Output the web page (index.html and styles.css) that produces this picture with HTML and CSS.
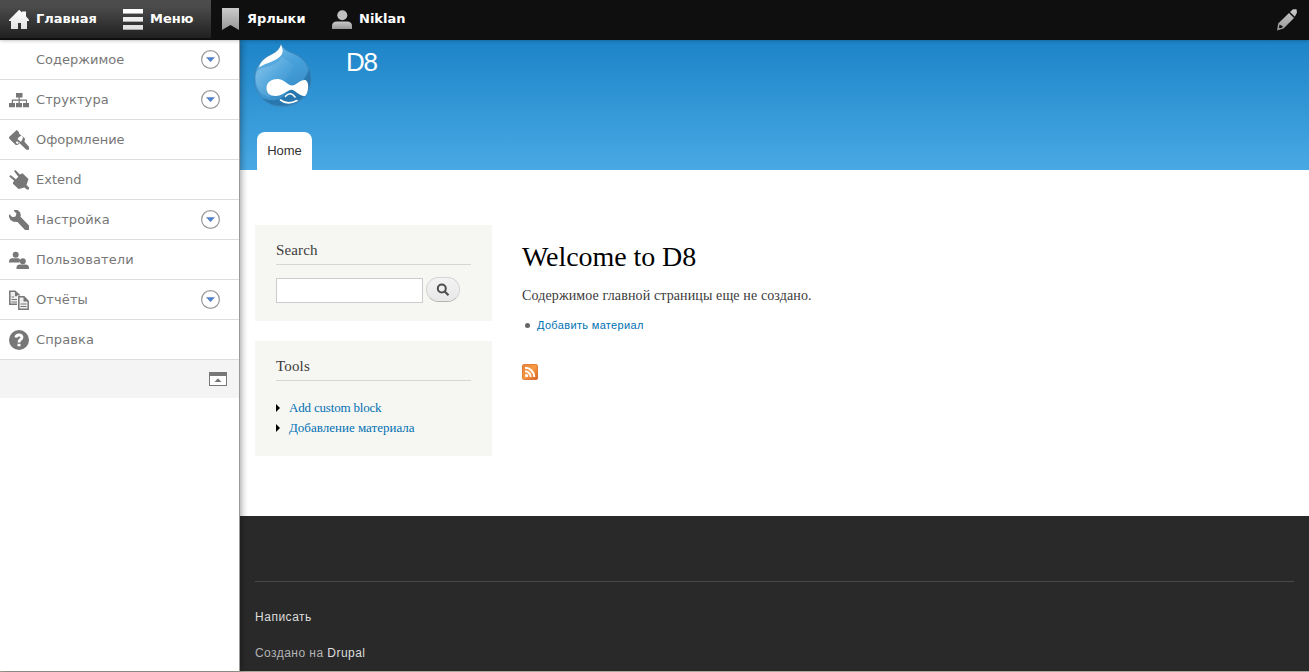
FILE: index.html
```html
<!DOCTYPE html>
<html lang="ru">
<head>
<meta charset="utf-8">
<title>Welcome to D8</title>
<link rel="stylesheet" href="styles.css">
</head>
<body>
<nav class="toolbar">
  <div class="toolbar-active">
    <a class="tab tab-home"><svg class="icon" width="20" height="20" viewBox="0 0 20 20"><defs><linearGradient id="w" x2="0" y2="1"><stop offset="0" stop-color="#fff"/><stop offset="1" stop-color="#e2e2e2"/></linearGradient><linearGradient id="g" x2="0" y2="1"><stop offset="0" stop-color="#cacaca"/><stop offset="1" stop-color="#979797"/></linearGradient></defs><path fill="url(#w)" d="M0 11 10.200 .8l2.800 2.700V2.500h4v4.800L20 10.800V12h-2v8h-6v-6H9v6H2V12H0z"/></svg><span class="home-text">Главная</span></a>
    <a class="tab tab-menu"><svg class="icon" width="20" height="22" viewBox="0 0 20 22"><g><rect width="20" height="5" fill="#fff"/><rect y="8" width="20" height="5" fill="#eee"/><rect y="16" width="20" height="5" fill="#e2e2e2"/></g><path fill="#aaa" d="M0 4h20v1H0zM0 12h20v1H0zM0 20h20v1H0z"/></svg><span>Меню</span></a>
  </div>
  <a class="tab tab-short"><svg class="icon" width="17" height="22" viewBox="0 0 17 22"><path fill="url(#g)" d="M0 0h17v22l-8.500-5L0 22z"/></svg><span>Ярлыки</span></a>
  <a class="tab tab-user"><svg class="icon" width="20" height="20" viewBox="0 0 20 20"><path fill="url(#g)" d="M0 19v-3q0-4.300 5-4.500h10q5 .2 5 4.500v3z"/><circle cx="10.300" cy="5.200" r="5" fill="#c0c0c0"/></svg><span>Niklan</span></a>
  <a class="tab-edit"><svg width="20" height="22" viewBox="0 0 20 22"><path fill="url(#g)" d="M0 21.500 1.200 14.500 12 4 17 9 6.500 19.500zM13 3 16 .3 19.500 .3 20 3.500 17.800 7.800z"/><path fill="#111" d="M2.500 15.500 6 17.600 4.500 19 2 19z"/></svg></a>
</nav>
<div class="layout">
  <aside class="tray">
    <ul class="tray-menu">
      <li><span class="ico"></span><a class="t1">Содержимое</a><svg class="toggle" width="19" height="19"><circle cx="9.500" cy="9.500" r="8.900"/><path d="M5 7.300h9L9.500 12z"/></svg></li>
      <li><span class="ico"><svg width="20" height="20" viewBox="0 0 20 20"><path d="M7 3h6.500v4.500h-2.700V9.500H18V13h2v4.300h-6V13h3v-2.300h-6.200V13H13v4.300H7V13h2.600v-2.300H4V13h2v4.300H0V13h2.800V9.500h6.800v-2H7z"/></svg></span><a class="t2">Структура</a><svg class="toggle" width="19" height="19"><circle cx="9.500" cy="9.500" r="8.900"/><path d="M5 7.300h9L9.500 12z"/></svg></li>
      <li><span class="ico"><svg width="20" height="20" viewBox="0 0 20 20"><path d="M7.700 0 10 2.200v1.300L16 8.500l-.5 3.200L20 16.800v3h-2.700L12.500 15 10.500 13.300 8.500 15H6.800L.3 8.800 0 7z"/><path fill="#fff" d="M12.300 5.300 14 7.500 13 10.500 10 13 8 14 6.800 12.500 8.500 10.500 9 8z"/><path d="m8.800 9.200 2.700 2.300L10 13 7.800 10.700z"/></svg></span><a>Оформление</a></li>
      <li><span class="ico"><svg width="20" height="20" viewBox="0 0 20 20"><path d="M5 1 6.500 0l4.300 4.500 2.700-1.300L19.500 9l-2 6 2.500 2.500v2h-2.200l-2.300-2-6 1.500L4 13.800v-1.300l1.200-1.700L.3 6.500 1.600 5l5.200 4.200 2.500-2.400z"/></svg></span><a>Extend</a></li>
      <li><span class="ico"><svg width="20" height="20" viewBox="0 0 20 20"><path d="M5 0h3.500L11 2.300l.8 2.500-.3 2L20 15.500V20h-4L8.500 12l-4-.2L1.500 10 0 7V4l3.500 3.200 3-.6 1-3L5 1z"/></svg></span><a class="t2">Настройка</a><svg class="toggle" width="19" height="19"><circle cx="9.500" cy="9.500" r="8.900"/><path d="M5 7.300h9L9.500 12z"/></svg></li>
      <li><span class="ico"><svg width="20" height="20" viewBox="0 0 20 20"><circle cx="6.700" cy="4.800" r="3"/><path d="M0 12.500v-1Q.2 8.400 3 8.200h6.500q1.500.2 1.500 2l-.5 2.300z"/><circle cx="13.800" cy="11.200" r="3"/><path d="M7.500 19v-1.500q.2-2.800 3.500-3h5.500q3.300.2 3.500 3V19z"/></svg></span><a class="t2">Пользователи</a></li>
      <li><span class="ico"><svg width="20" height="20" viewBox="0 0 20 20"><path fill="#eee" stroke="#777" stroke-width="1.500" d="M8.500 14.300H.8V1.300H6l5 4.500"/><path d="M6 1v5.200h5.500zM2.500 6.500H5v1H2.500zM2.500 9H8v1H2.500zM2.500 11.500H8v1H2.500z"/><path fill="#fff" d="M8 5.500h9l3 3V20H8z"/><path fill="#eee" stroke="#777" stroke-width="1.500" d="M9.800 6.800h5.200l4.200 4.400v8H9.800z"/><path d="M14.500 6.500v5H20zM11.500 13.500h6v1h-6zM11.500 16h6v1h-6z"/></svg></span><a class="t2">Отчёты</a><svg class="toggle" width="19" height="19"><circle cx="9.500" cy="9.500" r="8.900"/><path d="M5 7.300h9L9.500 12z"/></svg></li>
      <li><span class="ico"><svg width="20" height="20" viewBox="0 0 20 20"><circle cx="10" cy="10" r="10"/><path fill="none" stroke="#fff" stroke-width="2.800" d="M6.900 7.500Q7.200 5 10 5t3 2.300q0 1.300-1.500 2.200Q10 10.400 10 12.500"/><path fill="#fff" d="M8.500 13.800h3v2.500h-3z"/></svg></span><a class="t2">Справка</a></li>
    </ul>
    <div class="tray-foot"><svg width="18" height="14" viewBox="0 0 18 14"><path fill="#777" d="M0 0h18v14H0z"/><path fill="#fff" d="M1 4h16v9H1z"/><path fill="#777" d="M9 6.200 12.500 10h-7z"/></svg></div>
  </aside>
  <div class="page">
    <header class="header">
      <div class="brand">
        <svg class="logo" width="60" height="66" viewBox="0 0 60 66"><defs><linearGradient id="d" x1=".2" y1="0" x2=".7" y2="1"><stop offset="0" stop-color="#72b9e5"/><stop offset=".45" stop-color="#459fd9"/><stop offset="1" stop-color="#3487c0"/></linearGradient><linearGradient id="l" x1="0" y1="0" x2="1" y2=".6"><stop offset="0" stop-color="#9bd0f0" stop-opacity=".65"/><stop offset="1" stop-color="#72b9e5" stop-opacity="0"/></linearGradient></defs>
          <path fill="url(#d)" stroke="#3c80b0" stroke-width=".8" d="M29 .8C30.500 5 34 7.500 40 9.800 52 14.500 58.700 23.500 58.700 36.500 58.700 52.500 46 63.600 30.500 63.600S2.500 52 2.500 36C2.500 25.500 8 17.500 16 13 22 10 27.500 7 29 .8z"/>
          <path fill="url(#l)" d="M4 31Q5 27 10 25 26 22 30 14L42 22Q38 40 22 40L18 55 10 51Q2 42 4 31z"/>
          <path fill="#1f6ba2" opacity=".65" d="M57 26Q61 40 54 50 46 62 30 62.500 18 63 10 55 28 62 36 48 52 42 57 26z"/>
          <path fill="#fff" d="M29 1.500C30 5 32.500 9 28.500 13 22 19.500 15 19 7 24.500 9 17 15 14 20 11.500 25 9 28 6 29 1.500z"/>
          <path fill="#fff" d="M14.500 45C14.500 39 20 36 25.500 36 32 36 36 42.500 40 42.500S48 36.800 53 37C58 38 56.500 51 53 53 48 54 43 46.800 39.500 46.800 35.500 46.800 31 53 23.500 53 17.500 53 14.500 50 14.500 45z"/>
          <path fill="none" stroke="#fff" stroke-width="1.600" stroke-linecap="round" d="M33.500 53.300Q38.500 48 43 54M28.500 57Q35.500 62.500 45 57.500"/></svg>
        <span class="site-name">D8</span>
      </div>
      <a class="home-tab">Home</a>
    </header>
    <div class="columns">
      <div class="sidebar">
        <section class="block search"><h2>Search</h2>
          <div class="search-row"><input class="field" type="text"><button class="go"><svg width="14" height="14" viewBox="0 0 14 14"><circle cx="5.800" cy="5.500" r="4" fill="none" stroke="#4d4d4d" stroke-width="2"/><path stroke="#4d4d4d" stroke-width="2.200" d="m8.500 8.200 4 4"/></svg></button></div>
        </section>
        <section class="block tools"><h2>Tools</h2>
          <ul><li><i class="arrow"></i><a class="narrow">Add custom block</a></li><li><i class="arrow"></i><a>Добавление материала</a></li></ul>
        </section>
      </div>
      <main class="content">
        <h1>Welcome to D8</h1>
        <p>Содержимое главной страницы еще не создано.</p>
        <div class="action"><i class="dot"></i><a>Добавить материал</a></div>
        <svg class="feed" width="16" height="16" viewBox="0 0 16 16"><defs><linearGradient id="o" x2="1" y2="1"><stop offset="0" stop-color="#e58135"/><stop offset=".5" stop-color="#f79b42"/><stop offset="1" stop-color="#d65c27"/></linearGradient></defs><rect width="16" height="16" rx="2.500" fill="url(#o)"/><rect x=".5" y=".5" width="15" height="15" rx="2" fill="none" stroke="#d9743a" stroke-opacity=".6"/><circle cx="4.600" cy="11.600" r="1.600" fill="#fff"/><path fill="none" stroke="#fff" stroke-width="2" d="M3 7.300a5.800 5.800 0 0 1 5.800 5.800M3 3.800a9.300 9.300 0 0 1 9.300 9.300"/></svg>
      </main>
    </div>
    <footer class="footer">
      <div class="footer-line"></div>
      <a class="contact">Написать</a>
      <div class="powered">Создано на <a>Drupal</a></div>
    </footer>
  </div>
</div>
<div class="bottom-edge"></div>
</body>
</html>
```
FILE: styles.css
```css
* { box-sizing: border-box; }
body { margin: 0; width: 1309px; height: 672px; overflow: hidden; background: #fff; display: flex; flex-direction: column; }
ul { list-style: none; margin: 0; padding: 0; }
svg { display: block; flex: none; }
.toolbar { height: 40px; flex: none; display: flex; background: #0f0f0f; font: bold 13px/20px "DejaVu Sans", sans-serif; color: #fff; position: relative; z-index: 3; box-shadow: 0 0 4px rgba(0,0,0,.35); }
.toolbar-active { display: flex; width: 211px; height: 38px; background: linear-gradient(#4d4d4d, #4a4a4a 20%, #202020); }
.tab { display: flex; align-items: flex-start; white-space: nowrap; }
.tab span { margin-top: 9px; }
.tab-home { padding-left: 9px; gap: 7px; width: 123px; }
.tab-home .icon { margin-top: 9px; }
.tab-menu { gap: 7px; }
.tab-menu .icon { margin-top: 9px; }
.tab-short { padding-left: 11px; gap: 8px; width: 121px; }
.tab-short .icon { margin-top: 8px; }
.tab-user { gap: 7px; }
.tab-user .icon { margin-top: 10px; }
.tab-edit { margin-left: auto; padding: 9px 12px 0 0; }
.layout { display: flex; height: 631px; flex: none; }
.tray { width: 240px; flex: none; border-right: 1px solid #999; background: #fff; box-shadow: 1px 0 7px rgba(0,0,0,.4); position: relative; z-index: 2; }
.tray-menu li { height: 40px; display: flex; align-items: center; border-bottom: 1px solid #ddd; padding: 0 19px 0 9px; font: 13px/20px "DejaVu Sans", sans-serif; color: #777; }
.t2 { letter-spacing: .1px; }
.ico { width: 20px; height: 20px; margin: 1px 7px 0 0; fill: #777; }
.toggle { margin-left: auto; }
.toggle circle { fill: #fff; stroke: #999; stroke-width: 1.200; }
.toggle path { fill: #4f80c8; }
.tray-foot { height: 38px; background: #f4f4f4; display: flex; justify-content: flex-end; align-items: center; padding-right: 12px; }
.page { width: 1069px; display: flex; flex-direction: column; }
.header { height: 130px; flex: none; background: linear-gradient(#1d84c8, #48a9e4); display: flex; flex-direction: column; justify-content: space-between; }
.brand { display: flex; padding: 3px 0 0 12px; }
.site-name { margin: 3px 0 0 34px; font: 26px/32px "Liberation Sans", sans-serif; letter-spacing: -1.3px; color: #fff; }
.home-tab { width: 55px; height: 38px; margin-left: 17px; background: #fff; border-radius: 8px 8px 0 0; font: 13px/37px "Liberation Sans", sans-serif; text-align: center; color: #333; }
.columns { height: 346px; flex: none; display: flex; padding: 56px 0 0 15px; gap: 30px; }
.sidebar { width: 237px; display: flex; flex-direction: column; gap: 20px; margin-top: -1px; }
.block { background: #f6f6f2; padding: 15px 21px 0; font-family: "Liberation Serif", serif; }
.search { height: 96px; }
.tools { height: 115px; }
.block h2 { margin: 0; height: 25px; border-bottom: 1px solid #d6d6d6; font-size: 15px; line-height: 20px; font-weight: normal; letter-spacing: .15px; color: #3b3b3b; }
.search-row { display: flex; gap: 3px; margin-top: 12px; }
.field { width: 147px; height: 25px; border: 1px solid #ccc; background: #fff; padding: 0; margin-top: 1px; }
.go { width: 34px; height: 25px; border: 1px solid #d4d4d4; border-bottom-color: #b4b4b4; border-radius: 13px; background: linear-gradient(#f3f3f3, #e8e8e8); display: flex; align-items: center; justify-content: center; padding: 0; }
.tools ul { margin-top: 17px; }
.tools li { display: flex; align-items: center; height: 20px; font-size: 13px; line-height: 20px; color: #0071b3; }
.narrow { letter-spacing: -.18px; }
.arrow { width: 0; height: 0; border: 4px solid transparent; border-left-color: #000; border-right-width: 0; margin-right: 9px; }
.content { display: flex; flex-direction: column; align-items: flex-start; padding-top: 14px; font-family: "Liberation Serif", serif; }
.content h1 { margin: 0; font-size: 28px; line-height: 34px; font-weight: normal; letter-spacing: -.07px; color: #000; }
.content p { margin: 12px 0 0; font-size: 14px; line-height: 20px; letter-spacing: .125px; color: #3b3b3b; }
.action { display: flex; align-items: center; margin-top: 9px; padding-left: 3px; font: 11px/20px "Liberation Sans", sans-serif; letter-spacing: .34px; color: #0071b3; }
.dot { width: 5px; height: 5px; border-radius: 50%; background: #666; margin-right: 7px; }
.feed { margin-top: 29px; }
.footer { flex: 1; background: #292929; padding: 65px 15px 0; font: 12px/20px "Liberation Sans", sans-serif; letter-spacing: .45px; color: #b3b3b3; }
.footer-line { height: 1px; background: #494949; margin-bottom: 25px; }
.footer a { color: #ddd; }
.contact { display: block; letter-spacing: .52px; }
.powered { margin-top: 16px; }
.bottom-edge { height: 1px; flex: none; background: #a7a79f; }
```
